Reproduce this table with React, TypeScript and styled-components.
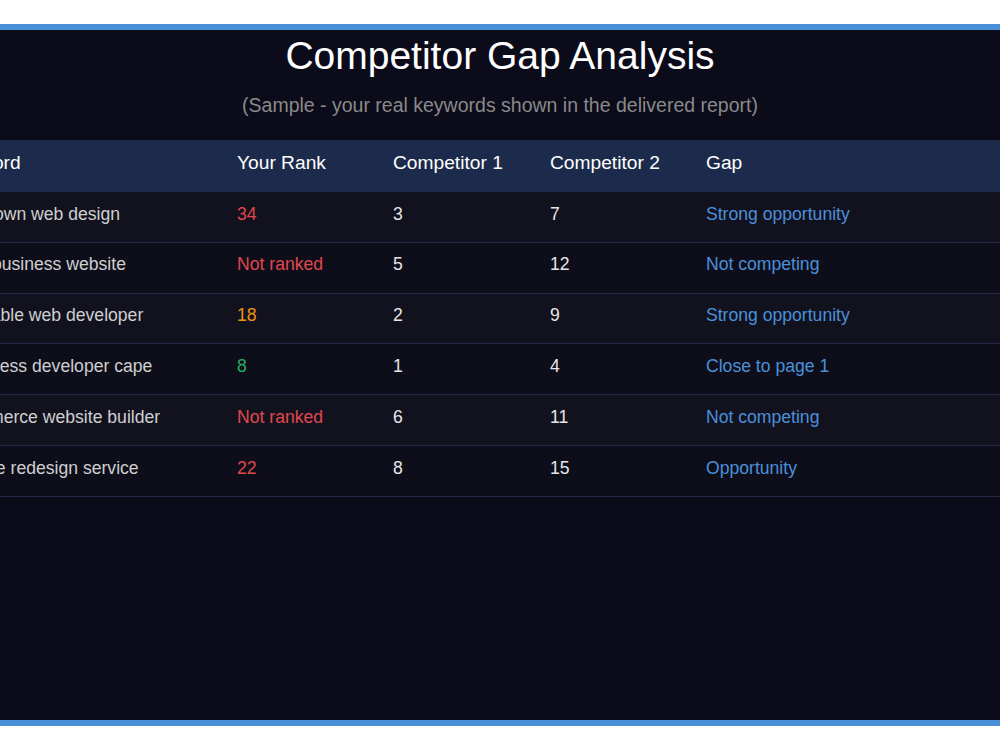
import React from "react";
import styled, { createGlobalStyle } from "styled-components";

const GlobalStyle = createGlobalStyle`
  html, body {
    margin: 0;
    padding: 0;
    background: #ffffff;
    overflow: hidden;
    font-family: "Liberation Sans", Arial, sans-serif;
  }
`;

const Page = styled.div`
  width: 1000px;
  height: 750px;
  overflow: hidden;
  padding-top: 24px;
  box-sizing: border-box;
`;

const Panel = styled.section`
  margin: 0 -90px;
  padding: 0 20px;
  height: 702px;
  box-sizing: border-box;
  background: #0b0b1a;
  border-top: 6px solid #4a90d9;
  border-bottom: 6px solid #4a90d9;
`;

const Title = styled.h1`
  margin: 0;
  padding-top: 4px;
  text-align: center;
  font-size: 39px;
  font-weight: 400;
  color: #ffffff;
`;

const Subtitle = styled.p`
  margin: 16px 0 0;
  text-align: center;
  font-size: 19.5px;
  color: #8a8a8a;
`;

const Table = styled.table`
  margin-top: 23px;
  width: 100%;
  border-collapse: collapse;
  table-layout: fixed;
`;

const HeadRow = styled.tr`
  background: #1c2b4b;
`;

const Th = styled.th<{ $w?: number }>`
  box-sizing: border-box;
  ${(p) => (p.$w ? `width: ${p.$w}px;` : "")}
  text-align: left;
  font-weight: 400;
  font-size: 19.2px;
  color: #ffffff;
  padding: 12px 16px 18px;
`;

const Row = styled.tr<{ $odd: boolean }>`
  background: ${(p) => (p.$odd ? "#12121f" : "#0e0e1b")};
  border-bottom: 1px solid #27264a;
`;

const Td = styled.td<{ $color?: string }>`
  font-size: 17.6px;
  color: ${(p) => p.$color || "#e6e6e6"};
  padding: 11.6px 16px 17.2px;
  white-space: nowrap;
  overflow: hidden;
`;

const KeywordCell = styled(Td)`
  color: #cfcfcf;
`;

const RED = "#e0474c";
const ORANGE = "#f0930f";
const GREEN = "#27ae60";
const BLUE = "#4a90d9";

const rows = [
  { kw: "cape town web design", rank: "34", rc: RED, c1: "3", c2: "7", gap: "Strong opportunity" },
  { kw: "small business website", rank: "Not ranked", rc: RED, c1: "5", c2: "12", gap: "Not competing" },
  { kw: "affordable web developer", rank: "18", rc: ORANGE, c1: "2", c2: "9", gap: "Strong opportunity" },
  { kw: "wordpress developer cape", rank: "8", rc: GREEN, c1: "1", c2: "4", gap: "Close to page 1" },
  { kw: "ecommerce website builder", rank: "Not ranked", rc: RED, c1: "6", c2: "11", gap: "Not competing" },
  { kw: "website redesign service", rank: "22", rc: RED, c1: "8", c2: "15", gap: "Opportunity" },
];

export default function App() {
  return (
    <>
      <GlobalStyle />
      <Page>
        <Panel>
          <Title>Competitor Gap Analysis</Title>
          <Subtitle>(Sample - your real keywords shown in the delivered report)</Subtitle>
          <Table>
            <thead>
              <HeadRow>
                <Th $w={291}>Keyword</Th>
                <Th $w={156}>Your Rank</Th>
                <Th $w={157}>Competitor 1</Th>
                <Th $w={156}>Competitor 2</Th>
                <Th>Gap</Th>
              </HeadRow>
            </thead>
            <tbody>
              {rows.map((r, i) => (
                <Row key={r.kw} $odd={i % 2 === 0}>
                  <KeywordCell>{r.kw}</KeywordCell>
                  <Td $color={r.rc}>{r.rank}</Td>
                  <Td>{r.c1}</Td>
                  <Td>{r.c2}</Td>
                  <Td $color={BLUE}>{r.gap}</Td>
                </Row>
              ))}
            </tbody>
          </Table>
        </Panel>
      </Page>
    </>
  );
}
